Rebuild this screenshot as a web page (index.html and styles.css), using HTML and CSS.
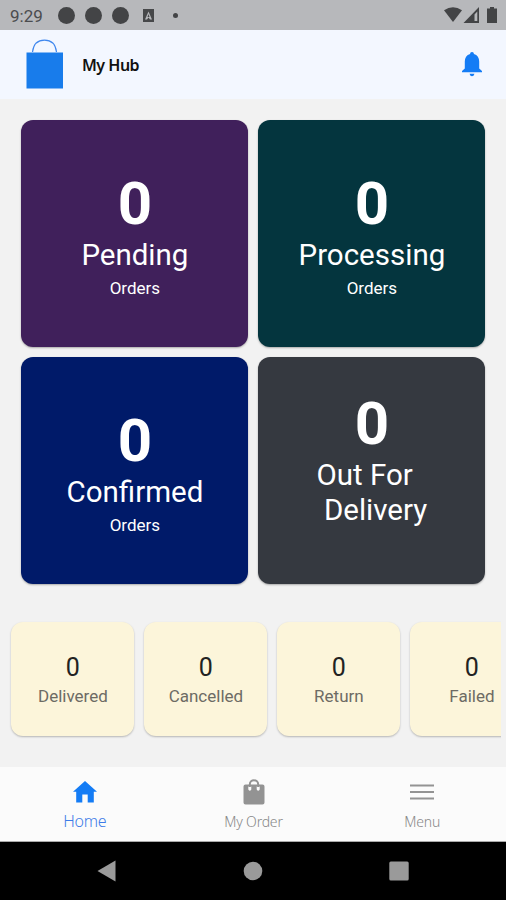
FILE: index.html
```html
<!DOCTYPE html>
<html lang="en">
<head>
    <meta charset="UTF-8">
    <meta name="viewport" content="width=device-width, initial-scale=1.0">
    <title>My Hub</title>
    <link rel="stylesheet" href="styles.css">
</head>
<body>
<div class="status-bar">
    <span class="time">9:29</span>
    <span class="dot"></span>
    <span class="dot"></span>
    <span class="dot"></span>
    <svg class="app-icon" width="11" height="13" viewBox="0 0 11 13">
        <path fill="#47484a" fill-rule="evenodd" d="M0 0H11V13H0ZM5.5 2.5L2 10.5H4L5.5 8.5L7 10.5H9Z"/>
        <path fill="#47484a" d="M5.5 5L4.5 8H6.5Z"/>
    </svg>
    <span class="small-dot"></span>
    <svg class="signals" width="54" height="16" viewBox="0 0 54 16">
        <path fill="#434446" d="M0 3.2Q9 -2.6 18 3.2L9 15Z"/>
        <path fill="#434446" fill-rule="evenodd" d="M35 0V16H19.500ZM33.300 4.500L30.500 7.500V14H33.300Z"/>
        <path fill="#434446" d="M46 0H50V1.500H53V16H43V1.500H46Z"/>
    </svg>
</div>

<div class="header">
    <svg class="logo" width="38" height="51" viewBox="0 0 38 51">
        <path fill="none" stroke="#3f87ee" stroke-width="1.200" d="M6.500 13C7.500 5 12 1.200 18.500 1.200S29.500 5 30.500 13"/>
        <rect fill="#187ceb" x="0.500" y="13.500" width="36.500" height="36"/>
    </svg>
    <h1>My Hub</h1>
    <svg class="bell" width="20" height="25" viewBox="0 0 20 25">
        <path fill="#147cf5" d="M10 0C11.200 0 11.900 .8 11.900 2C15.500 3 17.200 6 17.200 9.500V16.500L20 19V20.300H0V19L2.800 16.500V9.500C2.800 6 4.500 3 8.100 2C8.100 .8 8.800 0 10 0ZM7.600 21.800H12.400C12 23.500 11.200 24.300 10 24.300S8 23.500 7.600 21.800Z"/>
    </svg>
</div>

<div class="content">
    <div class="orders">
        <div class="card pending">
            <div class="count">0</div>
            <div class="name">Pending</div>
            <div class="sub">Orders</div>
        </div>
        <div class="card processing">
            <div class="count">0</div>
            <div class="name">Processing</div>
            <div class="sub">Orders</div>
        </div>
        <div class="card confirmed">
            <div class="count">0</div>
            <div class="name">Confirmed</div>
            <div class="sub">Orders</div>
        </div>
        <div class="card delivery">
            <div class="count">0</div>
            <div class="name">Out For  
 Delivery</div>
            <div class="sub"></div>
        </div>
    </div>

    <div class="totals">
        <div class="total"><b>0</b><span>Delivered</span></div>
        <div class="total"><b>0</b><span>Cancelled</span></div>
        <div class="total"><b>0</b><span>Return</span></div>
        <div class="total"><b>0</b><span>Failed</span></div>
    </div>
</div>

<div class="tabs">
    <a class="tab active">
        <svg width="24" height="28" viewBox="0 0 24 28">
            <path fill="#147cf5" d="M12 3L24 13.800H20.800V24.500H14.700V16.500H9.300V24.500H3.200V13.800H0Z"/>
        </svg>
        <span>Home</span>
    </a>
    <a class="tab">
        <svg width="22" height="28" viewBox="0 0 22 28">
            <path fill="none" stroke="#939393" stroke-width="2" d="M6.800 9V6.500C6.800 0.900 15.200 0.900 15.200 6.500V9"/>
            <path fill="#939393" fill-rule="evenodd" d="M2.500 6.500H19.500Q21.500 6.500 21.500 8.500V24.500Q21.500 26.500 19.500 26.500H2.500Q.5 26.500 .5 24.500V8.500Q.5 6.500 2.500 6.500ZM5.300 8.500V11.500Q6.800 14 8.300 11.500V8.500ZM13.700 8.500V11.500Q15.200 14 16.700 11.500V8.500Z"/>
        </svg>
        <span>My Order</span>
    </a>
    <a class="tab">
        <svg width="24" height="28" viewBox="0 0 24 28">
            <path stroke="#939393" stroke-width="2.200" d="M0 7.500H24M0 14H24M0 20.500H24"/>
        </svg>
        <span>Menu</span>
    </a>
</div>

<div class="nav-bar">
    <svg width="20" height="22" viewBox="0 0 20 22"><path fill="#9a9a9a" d="M18.500 .5V21.500L.5 11Z"/></svg>
    <svg width="20" height="20" viewBox="0 0 20 20"><circle fill="#9a9a9a" cx="10" cy="10" r="9.300"/></svg>
    <svg width="20" height="20" viewBox="0 0 20 20"><rect fill="#9a9a9a" x=".3" y=".5" width="19.400" height="19" rx="1.500"/></svg>
</div>
</body>
</html>
```
FILE: styles.css
```css
* {
    box-sizing: border-box;
}
body {
    margin: 0;
    height: 900px;
    display: flex;
    flex-direction: column;
    overflow: hidden;
    background-color: #f2f2f2;
    font-family: Roboto, sans-serif;
}
.status-bar {
    height: 30px;
    display: flex;
    align-items: center;
    padding: 0 8px 0 10px;
    background-color: #b7b8bb;
    color: #4b4c4f;
}
.time {
    width: 48px;
    padding-top: 2px;
    font-size: 17px;
}
.dot {
    width: 17px;
    height: 17px;
    margin-right: 10px;
    border-radius: 50%;
    background-color: #434446;
}
.app-icon {
    margin-left: 4px;
}
.small-dot {
    width: 5px;
    height: 5px;
    margin-left: 19px;
    border-radius: 50%;
    background-color: #434446;
}
.signals {
    margin-left: auto;
}
.header {
    height: 69px;
    display: flex;
    align-items: center;
    padding: 0 24px 0 26px;
    background-color: #f3f7ff;
}
.logo {
    margin-right: 18px;
}
h1 {
    margin: 0;
    font-family: "Noto Sans", sans-serif;
    font-size: 16px;
    font-weight: 600;
    letter-spacing: -0.5px;
    color: #111;
}
.bell {
    margin-left: auto;
}
.content {
    height: 668px;
    padding-top: 21px;
}
.orders {
    display: grid;
    grid-template-columns: 227px 227px;
    grid-auto-rows: 227px;
    gap: 10px;
    padding-left: 21.4px;
}
.card {
    display: flex;
    flex-direction: column;
    justify-content: center;
    padding-top: 1px;
    border-radius: 12px;
    color: white;
    text-align: center;
    box-shadow: 0 1px 2px rgba(0, 0, 0, 0.3);
}
.pending {
    background-color: #40205b;
}
.processing {
    background-color: #04353e;
}
.confirmed {
    background-color: #001a69;
}
.delivery {
    background-color: #353940;
}
.count {
    font-size: 60px;
    line-height: 68px;
    font-weight: bold;
}
.name {
    font-size: 29.5px;
    line-height: 35px;
    white-space: pre;
}
.sub {
    height: 20px;
    margin-top: 5px;
    font-size: 17px;
    line-height: 20px;
}
.totals {
    display: flex;
    gap: 10px;
    margin-top: 34px;
    margin-right: 5px;
    padding: 4px 0 4px 11.4px;
    overflow: hidden;
}
.total {
    flex: 0 0 123px;
    height: 114px;
    display: flex;
    flex-direction: column;
    align-items: center;
    padding-top: 31px;
    border-radius: 12px;
    background-color: #fcf5da;
    box-shadow: 0 1px 2px rgba(0, 0, 0, 0.25);
}
.total b {
    font-size: 25px;
    line-height: 29px;
    font-weight: normal;
    color: #222;
}
.total span {
    margin-top: 4px;
    font-size: 17px;
    line-height: 20px;
    color: #6d6b64;
}
.tabs {
    height: 75px;
    display: flex;
    background-color: #fbfbfb;
    border-bottom: 1px solid #aaa;
}
.tab {
    flex: 1;
    display: flex;
    flex-direction: column;
    align-items: center;
    padding: 11px 0 0 1px;
    font-family: "Noto Sans", sans-serif;
    font-size: 14px;
    font-weight: 300;
    letter-spacing: -0.2px;
    color: #888;
}
.tab span {
    margin-top: 6px;
    line-height: 20px;
}
.tab.active {
    font-size: 16px;
    color: #3d7ce8;
}
.tab.active span {
    margin-top: 5px;
}
.nav-bar {
    height: 58px;
    display: flex;
    align-items: center;
    justify-content: center;
    gap: 126px;
    background-color: #000;
}
```
